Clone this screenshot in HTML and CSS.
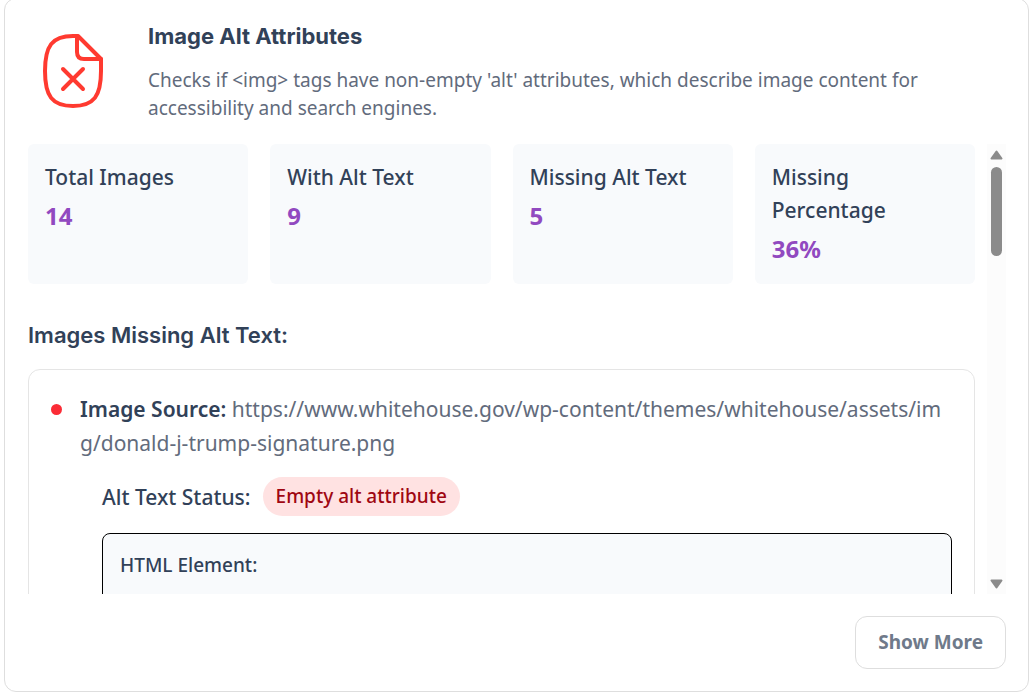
FILE: index.html
```html
<!DOCTYPE html>
<html lang="en">
<head>
<meta charset="utf-8">
<meta name="viewport" content="width=device-width, initial-scale=1">
<title>Image Alt Attributes</title>
<link rel="stylesheet" href="styles.css">
</head>
<body>
<main class="card">
  <header class="card-header">
    <svg class="status-icon" viewBox="0 1 90 90" aria-hidden="true">
      <path d="M50 10H45C24 10 17 20 17 45S24 80 45 80S73 70 73 45V33L50 10"/>
      <path d="M49 10V26Q49 33 56 33H73"/>
      <path d="M35 43L55 63M55 43L35 63"/>
    </svg>
    <div class="intro">
      <h1 class="title">Image Alt Attributes</h1>
      <p class="description">Checks if &lt;img&gt; tags have non-empty 'alt' attributes, which describe image content for accessibility and search engines.</p>
    </div>
  </header>

  <div class="viewport">
    <div class="scroll-area">
      <section class="stats">
        <div class="stat"><div class="stat-label">Total Images</div><div class="stat-value">14</div></div>
        <div class="stat"><div class="stat-label">With Alt Text</div><div class="stat-value">9</div></div>
        <div class="stat"><div class="stat-label">Missing Alt Text</div><div class="stat-value">5</div></div>
        <div class="stat"><div class="stat-label">Missing Percentage</div><div class="stat-value">36%</div></div>
      </section>
      <h2 class="list-title">Images Missing Alt Text:</h2>
      <ul class="issues">
        <li class="issue">
          <span class="dot"></span>
          <div class="issue-body">
            <p class="source"><strong class="source-label">Image Source:</strong> https://www.whitehouse.gov/wp-content/themes/whitehouse/assets/img/donald-j-trump-signature.png</p>
            <div class="details">
              <div class="status"><span class="status-label">Alt Text Status:</span><span class="badge">Empty alt attribute</span></div>
              <div class="element"><div class="element-label">HTML Element:</div></div>
            </div>
          </div>
        </li>
      </ul>
    </div>
    <div class="scrollbar" aria-hidden="true">
      <svg class="arrow" viewBox="0 0 13 10"><path d="M6.5 1.5L11.5 8.5H1.5Z"/></svg>
      <div class="track"><div class="thumb"></div></div>
      <svg class="arrow" viewBox="0 0 13 10"><path d="M6.5 8.5L11.5 1.5H1.5Z"/></svg>
    </div>
  </div>

  <footer class="card-footer"><button class="more" type="button">Show More</button></footer>
</main>
</body>
</html>
```
FILE: styles.css
```css
* { box-sizing: border-box; }

body {
  margin: 0;
  background: #fff;
  color: #314158;
  font-family: "Noto Sans", sans-serif;
  font-size: 21px;
  line-height: 34px;
}

h1, h2, p, ul { margin: 0; padding: 0; }

.card {
  display: flex;
  flex-direction: column;
  gap: 22px;
  margin: -2px 3px 0 4px;
  padding: 22px 22px 22px 23px;
  border: 1px solid #dedede;
  border-radius: 12px;
}

.card-header { display: flex; align-items: center; gap: 30px; }

.status-icon {
  flex: none;
  width: 90px;
  height: 90px;
  fill: none;
  stroke: #ff3a30;
  stroke-width: 4;
  stroke-linecap: round;
  stroke-linejoin: round;
}

.intro { display: flex; flex-direction: column; gap: 14px; max-width: 800px; }

.title, .list-title {
  font-family: Inter, sans-serif;
  font-size: 22px;
  font-weight: 600;
}

.title { line-height: 31px; font-weight: 700; }

.description { font-size: 19px; line-height: 28px; color: #626b7c; }

.viewport { display: flex; gap: 12px; height: 450px; }

.scroll-area {
  flex: 1;
  min-width: 0;
  overflow-y: auto;
  scrollbar-width: none;
}

.stats { display: grid; grid-template-columns: repeat(4, 1fr); gap: 22px; }

.stat { padding: 17px 17px 16px; border-radius: 6px; background: #f8fafc; }
.stat-label { font-weight: 500; line-height: 33px; }
.stat-value { margin-top: 3px; font-size: 24px; font-weight: 700; line-height: 38px; color: #9149c0; }

.list-title { margin: 34px 0 17px; }

.issues {
  list-style: none;
  padding: 22px;
  border: 1px solid #e5e5e5;
  border-radius: 12px;
}

.issue { display: flex; gap: 18px; }

.dot {
  flex: none;
  width: 11px;
  height: 11px;
  margin-top: 12px;
  border-radius: 50%;
  background: #fb2c36;
}

.issue-body { flex: 1; min-width: 0; }
.source { color: #626b7c; word-break: break-all; }
.source-label { font-weight: 600; color: #314158; }

.details { padding-left: 22px; }
.status { display: flex; align-items: center; gap: 12px; margin: 17px 0; }
.status-label { font-weight: 500; }

.badge {
  padding: 5px 13px;
  border-radius: 20px;
  background: #ffe2e2;
  color: #9f0712;
  font-size: 19px;
  font-weight: 500;
  line-height: 29px;
}

.element {
  height: 240px;
  padding: 17px;
  border: 1px solid #000;
  border-radius: 8px;
  background: #f8fafc;
}

.element-label { font-size: 19px; font-weight: 500; line-height: 29px; }

.scrollbar {
  display: flex;
  flex-direction: column;
  align-items: center;
  gap: 7px;
  width: 19px;
  padding: 6px 0 5px;
  background: #fcfcfc;
}

.arrow {
  width: 13px;
  height: 10px;
  fill: #8b8b8b;
  stroke: #8b8b8b;
  stroke-width: 2;
  stroke-linejoin: round;
}

.track { flex: 1; }
.thumb { width: 11px; height: 89px; border-radius: 6px; background: #8b8b8b; }

.card-footer { display: flex; justify-content: flex-end; }

.more {
  padding: 11px 22px;
  border: 1px solid #dedede;
  border-radius: 12px;
  background: #fff;
  color: #6f7a8a;
  font-family: inherit;
  font-size: 19px;
  font-weight: 700;
  line-height: 29px;
}
```
